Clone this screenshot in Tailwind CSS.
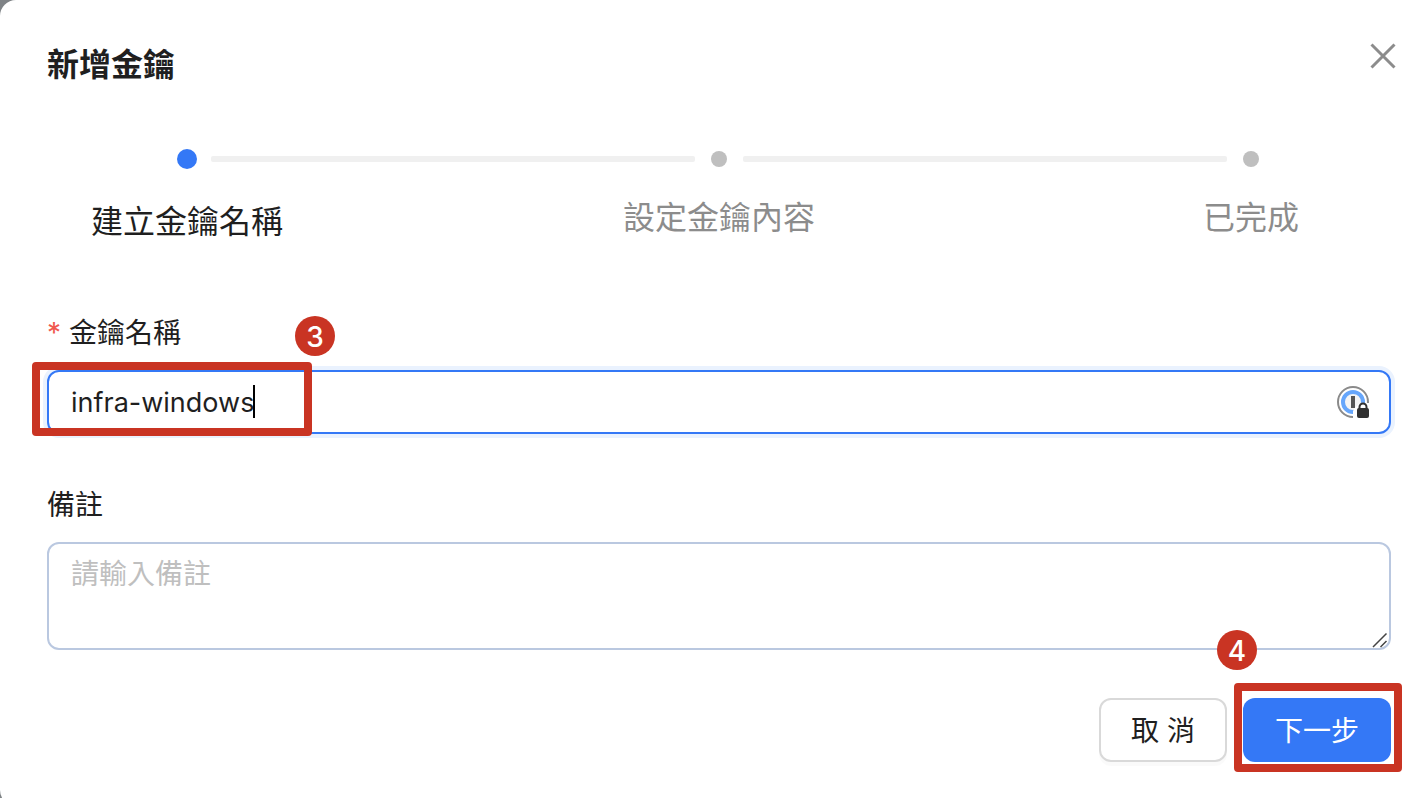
<!DOCTYPE html>
<html lang="zh-Hant">
<head>
<meta charset="utf-8">
<meta name="viewport" content="width=device-width, initial-scale=1">
<title>新增金鑰</title>
<script src="https://cdn.jsdelivr.net/npm/@tailwindcss/browser@4"></script>
</head>
<body class="h-screen overflow-hidden bg-[#7f8386] text-[#1f1f1f] font-[Inter,'Noto_Sans_CJK_TC',sans-serif]">
<main role="dialog" aria-labelledby="dialog-title" class="relative rounded-l-2xl bg-white pt-10 pb-11 pl-[47px] pr-[29px]">
  <header class="flex items-start justify-between">
    <h1 id="dialog-title" class="text-[32px] leading-[50px] font-bold">新增金鑰</h1>
    <button type="button" aria-label="關閉" class="-mr-2 flex size-8 items-center justify-center text-[#8c8c8c]">
      <svg class="size-8" viewBox="0 0 32 32" fill="none" stroke="currentColor" stroke-width="3" aria-hidden="true"><path d="M4.500 4.500 27.500 27.500M27.500 4.500 4.500 27.500"/></svg>
    </button>
  </header>

  <section aria-label="步驟" class="mt-[59px]">
    <div class="flex items-center px-[130px]" aria-hidden="true">
      <span class="size-5 rounded-full bg-[#3478f6]"></span>
      <span class="mx-3.5 h-1.5 flex-1 rounded-[2px] bg-[#f0f0f0]"></span>
      <span class="flex size-5 items-center justify-center"><span class="size-4 rounded-full bg-[#bfbfbf]"></span></span>
      <span class="mx-3.5 h-1.5 flex-1 rounded-[2px] bg-[#f0f0f0]"></span>
      <span class="flex size-5 items-center justify-center"><span class="size-4 rounded-full bg-[#bfbfbf]"></span></span>
    </div>
    <ol class="mt-6 flex items-start justify-between text-center text-[32px] leading-[50px] text-[#8c8c8c]">
      <li class="w-[280px] pt-1 text-[#1f1f1f]" aria-current="step">建立金鑰名稱</li>
      <li class="w-[280px]">設定金鑰內容</li>
      <li class="w-[280px]">已完成</li>
    </ol>
  </section>

  <form class="mt-[62px] text-[28px]">
    <div>
      <label for="key-name" class="flex h-12 items-center gap-2"><span class="text-[#f0584f]">*</span>金鑰名稱</label>
      <div class="relative mt-[13px]">
        <input id="key-name" type="text" value="infra-windows" required class="block h-16 w-full rounded-xl border-2 border-[#3478f6] bg-white pr-16 pl-[22px] text-[27px] shadow-[0_0_0_4px_#eaf2fe] outline-none">
        <span class="absolute top-[15px] left-[206px] h-[33px] w-0.5 bg-black" aria-hidden="true"></span>
        <svg class="absolute top-4 right-[22px] size-8" viewBox="0 0 32 32" fill="none" aria-hidden="true">
          <circle cx="16" cy="16" r="15" fill="#fff" stroke="#8a8a8a" stroke-width="2"/>
          <circle cx="16" cy="16" r="10" fill="#f4f4f4" stroke="#66a6fb" stroke-width="4"/>
          <path d="M16 10v12" stroke="#555" stroke-width="4"/>
          <path d="M32.500 17H27a6 6 0 0 0-7 3q-3 2-4 5v8h16.500z" fill="#fff"/>
          <path d="M22.500 23v-2a3.500 3.500 0 0 1 7 0v2" stroke="#303030" stroke-width="2"/>
          <rect x="20" y="22" width="12" height="10" rx="2" fill="#303030"/>
        </svg>
        <span class="pointer-events-none absolute -top-2 -left-[15px] h-[74px] w-[280px] rounded-[4px] border-8 border-[#c93423]" aria-hidden="true"></span>
        <span class="absolute -top-[54px] left-[248px] flex size-10 items-center justify-center rounded-full bg-[#c93423] pt-0.5 font-medium text-white">3</span>
      </div>
    </div>

    <div class="mt-[47px]">
      <label for="note" class="flex h-12 items-center">備註</label>
      <div class="relative mt-[13px]">
        <textarea id="note" placeholder="請輸入備註" class="block h-[108px] w-full resize-none rounded-xl border-2 border-[#bac8e0] bg-white px-[22px] py-2 text-[28px] leading-[44px] outline-none placeholder:text-[#bfbfbf]"></textarea>
        <svg class="absolute right-[3px] bottom-[2px] size-4" viewBox="0 0 16 16" fill="none" stroke="#444" stroke-width="1.500" aria-hidden="true"><path d="M1 15 14.500 1.500M8.500 15 14.500 9"/></svg>
      </div>
    </div>

    <div class="mt-12 flex justify-end gap-4">
      <button type="button" class="h-16 w-32 rounded-xl border-2 border-[#d9d9d9] bg-white pt-0.5 shadow-[0_4px_0_rgba(0,0,0,0.02)]">取 消</button>
      <div class="relative">
        <button type="submit" class="h-16 w-[148px] rounded-xl bg-[#3478f6] pt-0.5 text-white">下一步</button>
        <span class="pointer-events-none absolute -top-[15px] -left-[9px] h-[89px] w-[168px] rounded-[4px] border-8 border-[#c93423]" aria-hidden="true"></span>
        <span class="absolute -top-[68px] -left-[26px] flex size-10 items-center justify-center rounded-full bg-[#c93423] pt-0.5 font-medium text-white">4</span>
      </div>
    </div>
  </form>
</main>
</body>
</html>
